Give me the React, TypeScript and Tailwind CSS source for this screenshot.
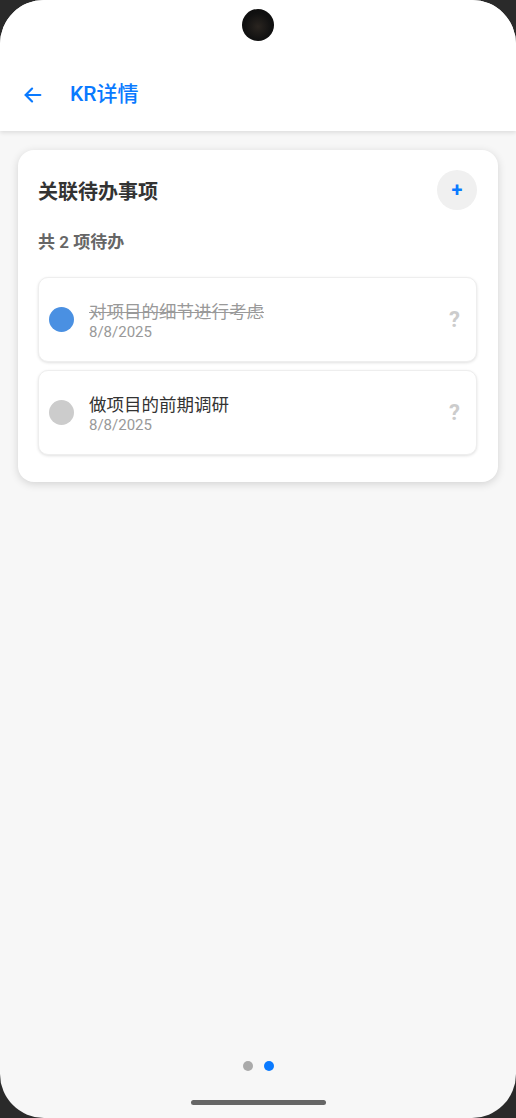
import React from "react";

const todos = [
  { title: "对项目的细节进行考虑", date: "8/8/2025", done: true },
  { title: "做项目的前期调研", date: "8/8/2025", done: false },
];

const TodoItem = ({ title, date, done }: { title: string; date: string; done: boolean }) => {
  return (
    <div className="flex items-center h-[85px] rounded-[10px] border border-[#eeeeee] bg-white shadow-[0_1px_3px_rgba(0,0,0,0.12)] pl-[10px] pr-[16px]">
      <div className={`w-[25px] h-[25px] rounded-full ${done ? "bg-[#4a90e2]" : "bg-[#cccccc]"}`} />
      <div className="flex flex-col ml-[15px] flex-1 pt-[2px]">
        <div
          className={`text-[17.5px] leading-[22px] ${done ? "text-[#999999] line-through" : "text-[#333333]"}`}
        >
          {title}
        </div>
        <div className="text-[15px] leading-[18px] text-[#999999]">{date}</div>
      </div>
      <div className="text-[22px] font-bold text-[#cccccc]">?</div>
    </div>
  );
};

export default function App() {
  return (
    <div
      className="w-[516px] h-[1118px] bg-[#2a2a2a]"
      style={{ fontFamily: 'Roboto, "Noto Sans CJK SC", sans-serif' }}
    >
      <div className="relative w-full h-full rounded-[44px] overflow-hidden bg-[#f7f7f7] flex flex-col">
        {/* camera */}
        <div className="absolute left-[242px] top-[9px] w-[32px] h-[32px] rounded-full bg-[radial-gradient(circle_at_50%_55%,#2a2520_0%,#111_55%,#0a0a0a_100%)]" />

        <div className="bg-white pt-[59px] shadow-[0_2px_4px_rgba(0,0,0,0.1)]">
          <div className="flex items-center h-[72px] px-[22px]">
            <svg width="22" height="22" viewBox="0 0 24 24" fill="none" stroke="#0a7aff" strokeWidth="2.4" strokeLinecap="round" strokeLinejoin="round">
              <path d="M20 12H4" />
              <path d="M11 5l-7 7 7 7" />
            </svg>
            <div className="ml-[26px] text-[21px] font-medium text-[#0a7aff]">KR详情</div>
          </div>
        </div>

        <div className="mx-[18px] mt-[19px] bg-white rounded-[16px] shadow-[0_2px_8px_rgba(0,0,0,0.15)] pl-[20px] pr-[21px] pt-[20px] pb-[27px]">
          <div className="flex items-center justify-between h-[40px]">
            <div className="mt-[4px] text-[20px] leading-[28px] font-bold text-[#333333]">关联待办事项</div>
            <div className="w-[40px] h-[40px] rounded-full bg-[#f0f0f0] flex items-center justify-center">
              <span className="text-[20px] font-bold text-[#0a7aff] leading-none">+</span>
            </div>
          </div>
          <div className="mt-[20px] text-[17px] leading-[24px] font-semibold text-[#666666]">共 2 项待办</div>
          <div className="mt-[23px] flex flex-col gap-[8px]">
            {todos.map((t) => (
              <TodoItem key={t.title} {...t} />
            ))}
          </div>
        </div>

        <div className="flex-1" />
        <div className="flex justify-center gap-[11px] mb-[29px]">
          <div className="w-[10px] h-[10px] rounded-full bg-[#aaaaaa]" />
          <div className="w-[10px] h-[10px] rounded-full bg-[#0a7aff]" />
        </div>
        <div className="flex justify-center mb-[13px]">
          <div className="w-[135px] h-[5px] rounded-full bg-[#666666]" />
        </div>
      </div>
    </div>
  );
}
